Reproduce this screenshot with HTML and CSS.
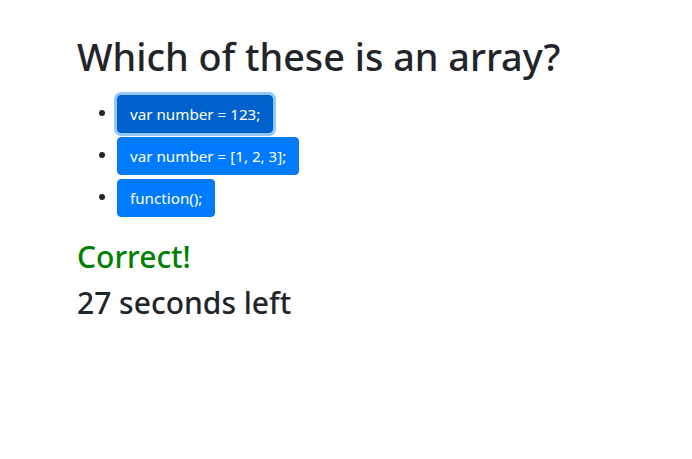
FILE: index.html
```html
<!DOCTYPE html>
<html lang="en">
<head>
<meta charset="utf-8">
<title>Quiz</title>
<link rel="stylesheet" href="styles.css">
</head>
<body>
<div class="container">
  <h1 class="question">Which of these is an array?</h1>
  <ul class="answers">
    <li><button class="btn btn-focus" type="button">var number = 123;</button></li>
    <li><button class="btn" type="button">var number = [1, 2, 3];</button></li>
    <li><button class="btn" type="button">function();</button></li>
  </ul>
  <h2 class="status status-correct">Correct!</h2>
  <h2 class="status">27 seconds left</h2>
</div>
</body>
</html>
```
FILE: styles.css
```css
html, body {
  margin: 0;
  padding: 0;
  background: #fff;
}

body {
  font-family: "Noto Sans", "Open Sans", sans-serif;
  font-size: 16px;
  line-height: 1.5;
  color: #212529;
}

.container {
  padding: 33px 0 0 77px;
}

.question {
  margin: 0 0 10px;
  font-size: 37.8px;
  font-weight: 500;
  line-height: 48px;
}

.answers {
  margin: 0 0 21px;
  padding: 0 0 0 40px;
}

.answers li {
  line-height: 42px;
}

.btn {
  display: inline-block;
  vertical-align: middle;
  box-sizing: border-box;
  height: 38px;
  margin: 0;
  padding: 6px 12px;
  border: 1px solid #007bff;
  border-radius: 4px;
  background: #007bff;
  color: #fff;
  font-family: "Noto Sans", "Open Sans", sans-serif;
  font-size: 15.2px;
  font-weight: 400;
  line-height: 24px;
  cursor: pointer;
}

.btn-focus {
  background: #0062cc;
  border-color: #005cbf;
  box-shadow: 0 0 0 3px rgba(38, 143, 255, 0.5);
}

.status {
  margin: 0 0 8px;
  font-size: 30px;
  font-weight: 500;
  line-height: 38.4px;
}

.status-correct {
  color: #008000;
}
```
